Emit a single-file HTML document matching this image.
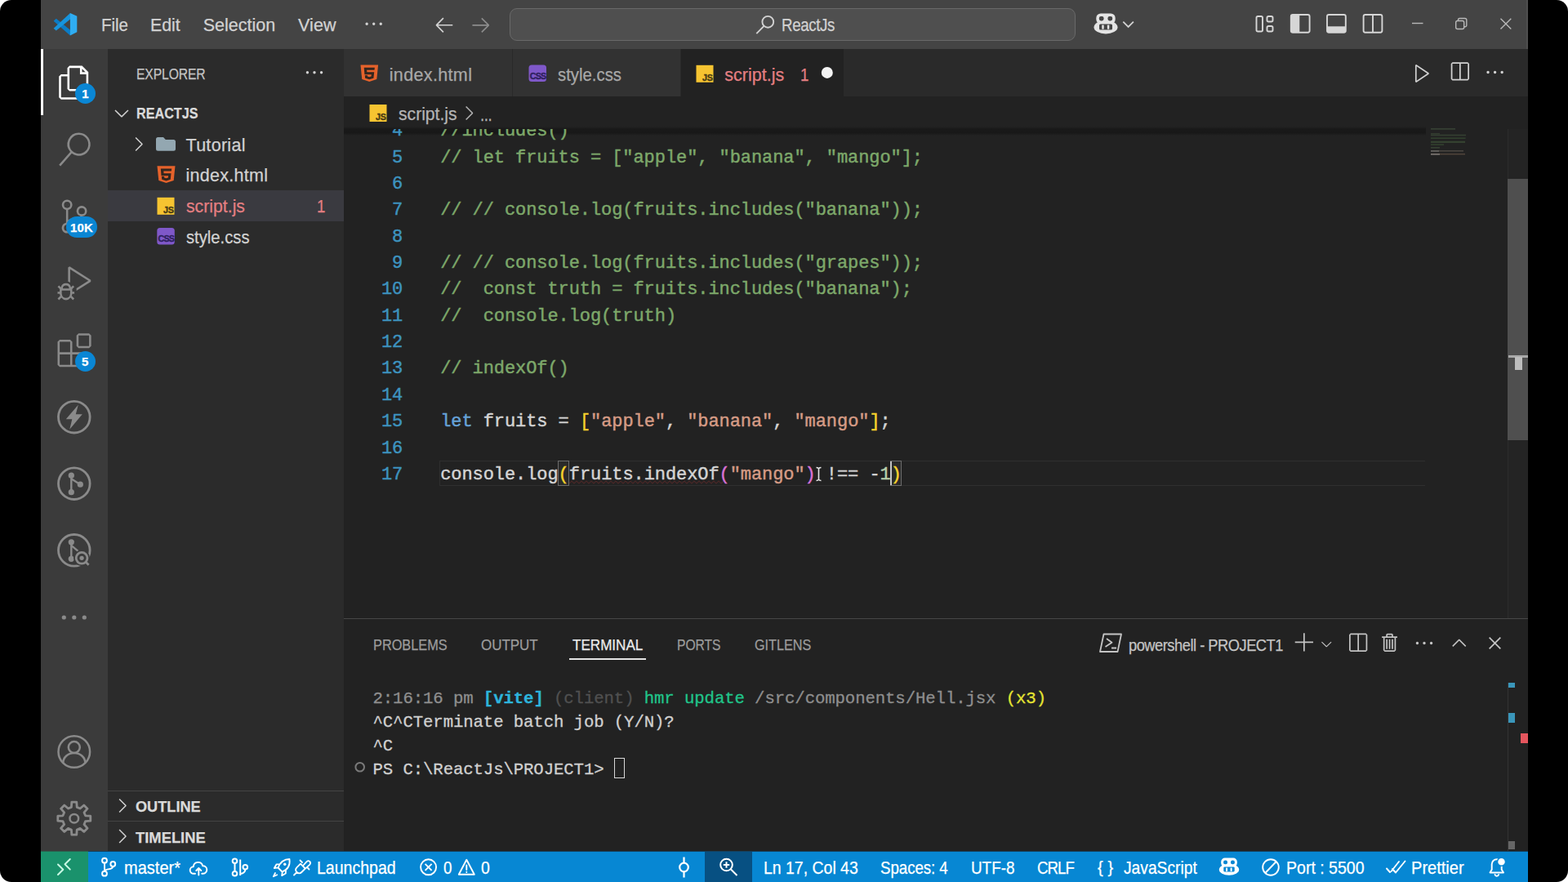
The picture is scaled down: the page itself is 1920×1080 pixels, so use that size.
<!DOCTYPE html>
<html lang="en"><head><meta charset="utf-8"><title>script.js - ReactJs - Visual Studio Code</title>
<style>
html,body{margin:0;padding:0;background:#fff;}
body{width:1920px;height:1080px;overflow:hidden;font-family:"Liberation Sans",sans-serif;}
#frame{position:absolute;left:0;top:0;width:1920px;height:1080px;background:#000;border-radius:14px;overflow:hidden;}
#frame>div{position:absolute;}
#ico{position:absolute;left:0;top:0;}
.t{position:absolute;white-space:pre;transform-origin:0 50%;-webkit-text-stroke:0.25px;}
#code{left:421px;top:158px;width:1325px;height:599px;overflow:hidden;}
#code div{position:absolute;white-space:pre;font-family:"Liberation Mono",monospace;font-size:22px;letter-spacing:-0.074px;height:32px;line-height:32px;color:#d4d4d4;-webkit-text-stroke:0.45px;}
#code .n{left:0;width:72.2px;text-align:right;color:#3d93bf;}
#code .l{left:118.2px;}
.c{color:#7da86a}.k{color:#66a2d8}.s{color:#d59b85}.y{color:#f6d22c}.m{color:#d873d6}.u{color:#b9d0ab}
#term{left:456.5px;top:840.6px;}
#term div{position:absolute;left:0;white-space:pre;font-family:"Liberation Mono",monospace;font-size:20.7px;letter-spacing:-0.11px;height:29px;line-height:29px;color:#d0d0d0;-webkit-text-stroke:0.3px;}
.g1{color:#8e8e8e}.g2{color:#505050}.cy{color:#2db4dc;font-weight:bold}.gr{color:#20c58a}.ye{color:#e4e432}
</style></head><body>
<div id="frame">
<div style="left:50px;top:0px;width:1821px;height:1080px;background:#222222;"></div>
<div style="left:50px;top:0px;width:1821px;height:60px;background:#444444;"></div>
<div style="left:1869px;top:0px;width:2px;height:60px;background:#4e4e4e;"></div>
<div style="left:624px;top:10px;width:693px;height:40px;background:#4f4f4f;border:1px solid #696969;border-radius:9px;box-sizing:border-box;"></div>
<div style="left:50px;top:60px;width:82px;height:982px;background:#3b3b3b;"></div>
<div style="left:50px;top:60px;width:3px;height:81px;background:#ffffff;"></div>
<div style="left:132px;top:60px;width:289px;height:982px;background:#2b2b2b;"></div>
<div style="left:132px;top:233px;width:289px;height:38px;background:#3a3a40;"></div>
<div style="left:132px;top:968px;width:289px;height:1px;background:#444;"></div>
<div style="left:132px;top:1005px;width:289px;height:1px;background:#444;"></div>
<div style="left:421px;top:60px;width:1450px;height:58px;background:#2a2a2a;"></div>
<div style="left:421px;top:60px;width:206px;height:58px;background:#323232;"></div>
<div style="left:628px;top:60px;width:205px;height:58px;background:#323232;"></div>
<div style="left:834px;top:60px;width:199px;height:58px;background:#222222;"></div>
<div style="left:421px;top:155px;width:1325px;height:11px;background:linear-gradient(#222 0%,#191919 28%,#181818 70%,#222 100%);"></div>
<div style="left:538px;top:564px;width:1207px;height:31px;background:transparent;border:1px solid #2f2f2f;border-right:none;box-sizing:border-box;"></div>
<div style="left:683.3px;top:564px;width:13.7px;height:31px;background:#2a2a2a;border:1px solid #6c6c6c;box-sizing:border-box;"></div>
<div style="left:1090px;top:564px;width:13.8px;height:31px;background:#2a2a2a;border:1px solid #6c6c6c;box-sizing:border-box;"></div>
<div style="left:1089.6px;top:565px;width:2.6px;height:29px;background:#c4c4c4;"></div>
<div style="left:1846px;top:158px;width:25px;height:599px;background:#242424;border-left:1.5px solid #2c2c2c;box-sizing:border-box;"></div>
<div style="left:1846px;top:219px;width:25px;height:320px;background:#4f4f4f;"></div>
<div style="left:1847px;top:435px;width:24px;height:3px;background:#a8a8a8;"></div>
<div style="left:1855px;top:437px;width:9px;height:16px;background:#bdbdbd;"></div>
<div style="left:421px;top:757px;width:1450px;height:1px;background:#474747;"></div>
<div style="left:697px;top:806px;width:94px;height:2px;background:#e4e4e4;"></div>
<div style="left:1846px;top:836px;width:1px;height:206px;background:#333;"></div>
<div style="left:1847px;top:836px;width:8px;height:6px;background:#3a96ba;"></div>
<div style="left:1847px;top:873px;width:8px;height:12px;background:#3a96ba;"></div>
<div style="left:1862px;top:898px;width:9px;height:12px;background:#e5565e;"></div>
<div style="left:1847px;top:1030px;width:8px;height:10px;background:#666;"></div>
<div style="left:752px;top:928px;width:13px;height:25px;background:transparent;border:1.5px solid #d8d8d8;box-sizing:border-box;"></div>
<div style="left:50px;top:1042px;width:1821px;height:1px;background:#15415f;"></div>
<div style="left:50px;top:1042px;width:58px;height:1px;background:#2a6350;"></div>
<div style="left:50px;top:1043px;width:1821px;height:37px;background:#0787d3;"></div>
<div style="left:50px;top:1043px;width:58px;height:37px;background:#1a926c;"></div>
<div style="left:863px;top:1043px;width:58px;height:37px;background:#075082;"></div>
<svg id="ico" width="1920" height="1080" viewBox="0 0 1920 1080">
<path transform="translate(70.5 80.6) scale(1.714)" d="M17.5 0h-9L7 1.5V6H2.5L1 7.5v15.07L2.5 24h12.07L16 22.57V18h4.7l1.3-1.43V4.5L17.5 0zm0 2.12l2.38 2.38H17.5V2.12zm-3 20.38h-12v-15H7v9.07L8.5 18h6v4.5zm6-6h-12v-15H16V6h4.5v10.5z" fill="#ffffff" />
<path transform="translate(70.5 162.5) scale(1.714)" d="M15.25 0a8.25 8.25 0 0 0-6.18 13.72L1 22.88l1.12 1 8.05-9.12A8.251 8.251 0 1 0 15.25.01V0zm0 15a6.75 6.75 0 1 1 0-13.5 6.75 6.75 0 0 1 0 13.5z" fill="#8a8a8a" />
<path transform="translate(70.5 244.4) scale(1.714)" d="M21.007 8.222A3.738 3.738 0 0 0 15.045 5.2a3.737 3.737 0 0 0 1.156 6.583 2.988 2.988 0 0 1-2.668 1.67h-2.99a4.456 4.456 0 0 0-2.989 1.165V7.4a3.737 3.737 0 1 0-1.494 0v9.117a3.776 3.776 0 1 0 1.816.099 2.99 2.99 0 0 1 2.668-1.667h2.99a4.484 4.484 0 0 0 4.223-3.039 3.736 3.736 0 0 0 3.25-3.687zM4.565 3.738a2.242 2.242 0 1 1 4.484 0 2.242 2.242 0 0 1-4.484 0zm4.484 16.441a2.242 2.242 0 1 1-4.484 0 2.242 2.242 0 0 1 4.484 0zm8.221-9.715a2.242 2.242 0 1 1 0-4.485 2.242 2.242 0 0 1 0 4.485z" fill="#8a8a8a" />
<path transform="translate(70.5 326.30000000000007) scale(1.714)" d="M10.94 13.5l-1.32 1.32a3.73 3.73 0 0 0-7.24 0L1.06 13.5 0 14.56l1.72 1.72-.22.22V18H0v1.5h1.5v.08c.077.489.214.966.41 1.42L0 22.94 1.06 24l1.65-1.65A4.308 4.308 0 0 0 6 24a4.31 4.31 0 0 0 3.29-1.65L10.94 24 12 22.94 10.09 21c.198-.464.336-.951.41-1.45v-.1H12V18h-1.5v-1.5l-.22-.22L12 14.56l-1.06-1.06zM6 13.5a2.25 2.25 0 0 1 2.25 2.25h-4.5A2.25 2.25 0 0 1 6 13.5zm3 6a3.33 3.33 0 0 1-3 3 3.33 3.33 0 0 1-3-3v-2.25h6v2.25zm14.76-9.9v1.26L13.5 17.37V15.6l8.5-5.37L9 2v9.46a5.07 5.07 0 0 0-1.5-.72V.63L8.64 0l15.12 9.6z" fill="#8a8a8a" />
<path transform="translate(70.5 408.20000000000005) scale(1.714)" d="M13.5 1.5L15 0h7.5L24 1.5V9l-1.5 1.5H15L13.5 9V1.5zm1.5 0V9h7.5V1.5H15zM0 15V6l1.5-1.5H9L10.5 6v7.5H18l1.5 1.5v7.5L18 24H1.5L0 22.5V15zm9-1.5V6H1.5v7.5H9zM9 15H1.5v7.5H9V15zm1.5 7.5H18V15h-7.5v7.5z" fill="#8a8a8a" />
<circle cx="90.8" cy="510.7" r="19.3" fill="none" stroke="#8a8a8a" stroke-width="2.800"/>
<path d="M95.8 495.7L80.8 513.2H88.3L85.3 525.7L100.8 507.2H92.8z" fill="#8a8a8a"/>
<circle cx="90.8" cy="592.2" r="19.3" fill="none" stroke="#8a8a8a" stroke-width="2.800"/>
<g fill="#8a8a8a" stroke="#8a8a8a"><circle cx="87.3" cy="582.2" r="3.6" stroke="none"/><circle cx="87.3" cy="602.7" r="3.6" stroke="none"/><circle cx="98.3" cy="593.2" r="3.6" stroke="none"/><path d="M87.3 582.2V602.7M87.3 586.2L98.3 593.2" fill="none" stroke-width="2.4"/></g>
<circle cx="90.8" cy="673.8" r="19.3" fill="none" stroke="#8a8a8a" stroke-width="2.800"/>
<g fill="#8a8a8a" stroke="#8a8a8a"><circle cx="87.3" cy="663.8" r="3.6" stroke="none"/><circle cx="87.3" cy="684.3" r="3.6" stroke="none"/><path d="M87.3 663.8V684.3M87.3 667.8L96.8 675.8" fill="none" stroke-width="2.4"/></g>
<circle cx="100.1" cy="683.3" r="10" fill="#3b3b3b"/><circle cx="100.1" cy="683.3" r="6.900" fill="none" stroke="#8a8a8a" stroke-width="2.800"/><circle cx="100.1" cy="683.3" r="2.600" fill="#8a8a8a"/><path d="M105.1 688.3l3.500 3.500" stroke="#8a8a8a" stroke-width="2.800"/>
<circle cx="78.3" cy="756" r="2.6" fill="#8a8a8a"/>
<circle cx="90.8" cy="756" r="2.6" fill="#8a8a8a"/>
<circle cx="103.3" cy="756" r="2.6" fill="#8a8a8a"/>
<circle cx="90.8" cy="920.5" r="19.3" fill="none" stroke="#8a8a8a" stroke-width="2.5"/>
<circle cx="90.8" cy="915.0" r="7" fill="none" stroke="#8a8a8a" stroke-width="2.5"/>
<path d="M77.3 934.0a13.5 12 0 0 1 27 0" fill="none" stroke="#8a8a8a" stroke-width="2.5"/>
<path d="M110.8 999.2L110.8 1005.2L104.6 1005.6L103.0 1009.5L107.0 1014.2L102.8 1018.4L98.1 1014.4L94.2 1016.0L93.8 1022.2L87.8 1022.2L87.4 1016.0L83.5 1014.4L78.8 1018.4L74.6 1014.2L78.6 1009.5L77.0 1005.6L70.8 1005.2L70.8 999.2L77.0 998.8L78.6 994.9L74.6 990.2L78.8 986.0L83.5 990.0L87.4 988.4L87.8 982.2L93.8 982.2L94.2 988.4L98.1 990.0L102.8 986.0L107.0 990.2L103.0 994.9L104.6 998.8Z" fill="none" stroke="#8a8a8a" stroke-width="2.800" stroke-linejoin="round"/>
<circle cx="90.8" cy="1002.2" r="5.3" fill="none" stroke="#8a8a8a" stroke-width="2.5"/>
<path d="M65.600 25.800l3.200-3 17.200 14v6.700z" fill="#0b7cc6"/><path d="M65.600 34.800l3.200 2.600 17.200-14v-7.500z" fill="#1794dc"/><path d="M85.900 15.900l8.400 3.900v19.500l-8.400 4.200z" fill="#2fadf2"/>
<path transform="translate(444.0 15.600000000000001) scale(1.7125)" d="M4 8a1 1 0 1 1-2 0 1 1 0 0 1 2 0zm5 0a1 1 0 1 1-2 0 1 1 0 0 1 2 0zm5 0a1 1 0 1 1-2 0 1 1 0 0 1 2 0z" fill="#d2d2d2" />
<path transform="translate(530.3 16.3) scale(1.7125)" d="M7 3.093l-5 5V8.8l5 5 .707-.707-4.146-4.147H14v-1H3.56L7.708 3.8 7 3.093z" fill="#d2d2d2" />
<path transform="translate(575.0 16.3) scale(1.7125)" d="M9 13.887l5-5V8.18l-5-5-.707.707 4.146 4.147H2v1h10.44L8.292 13.18l.707.707z" fill="#8c8c8c" />
<g fill="none" stroke="#d2d2d2" stroke-width="1.900"><circle cx="940.300" cy="26.800" r="6.900"/><path d="M935.500 31.800l-9.200 9.300"/></g>
<path transform="translate(371.3 75.0) scale(1.7125)" d="M4 8a1 1 0 1 1-2 0 1 1 0 0 1 2 0zm5 0a1 1 0 1 1-2 0 1 1 0 0 1 2 0zm5 0a1 1 0 1 1-2 0 1 1 0 0 1 2 0z" fill="#d2d2d2" />
<path transform="translate(135.3 124.60000000000001) scale(1.7125)" d="M7.976 10.072l4.357-4.357.62.618L8.284 11h-.618L3 6.333l.619-.618 4.357 4.357z" fill="#d2d2d2" />
<path transform="translate(155.8 162.8) scale(1.7125)" d="M10.072 8.024L5.715 3.667l.618-.62L11 7.716v.618L6.333 13l-.618-.619 4.357-4.357z" fill="#d2d2d2" />
<path transform="translate(135.8 972.8) scale(1.7125)" d="M10.072 8.024L5.715 3.667l.618-.62L11 7.716v.618L6.333 13l-.618-.619 4.357-4.357z" fill="#d2d2d2" />
<path transform="translate(135.8 1010.3) scale(1.7125)" d="M10.072 8.024L5.715 3.667l.618-.62L11 7.716v.618L6.333 13l-.618-.619 4.357-4.357z" fill="#d2d2d2" />
<path transform="translate(560.3 124.8) scale(1.7125)" d="M10.072 8.024L5.715 3.667l.618-.62L11 7.716v.618L6.333 13l-.618-.619 4.357-4.357z" fill="#b4b4b4" />
<path transform="translate(1727.8 75.6) scale(1.7125)" d="M3.78 2L3 2.41v12l.78.42 9-6V8l-9-6zM4 13.48V3.35l7.6 5.07L4 13.48z" fill="#d2d2d2" />
<path transform="translate(1773.3 74.6) scale(1.7125)" d="M14 1H3L2 2v11l1 1h11l1-1V2l-1-1zM8 13H3V2h5v11zm6 0H9V2h5v11z" fill="#d2d2d2" />
<path transform="translate(1816.8999999999999 74.8) scale(1.7125)" d="M4 8a1 1 0 1 1-2 0 1 1 0 0 1 2 0zm5 0a1 1 0 1 1-2 0 1 1 0 0 1 2 0zm5 0a1 1 0 1 1-2 0 1 1 0 0 1 2 0z" fill="#d2d2d2" />
<path transform="translate(1584.0 773.5999999999999) scale(1.7125)" d="M14 7v1H8v6H7V8H1V7h6V1h1v6h6z" fill="#c4c4c4" />
<path transform="translate(1614.3 778.5) scale(1.25)" d="M7.976 10.072l4.357-4.357.62.618L8.284 11h-.618L3 6.333l.619-.618 4.357 4.357z" fill="#c4c4c4" />
<path transform="translate(1648.6 773.9) scale(1.7125)" d="M14 1H3L2 2v11l1 1h11l1-1V2l-1-1zM8 13H3V2h5v11zm6 0H9V2h5v11z" fill="#c4c4c4" />
<path transform="translate(1688.7 774.0999999999999) scale(1.7125)" d="M10 3h3v1h-1v9l-1 1H4l-1-1V4H2V3h3V2a1 1 0 0 1 1-1h3a1 1 0 0 1 1 1v1zM9 2H6v1h3V2zM4 13h7V4H4v9zm2-8H5v7h1V5zm1 0h1v7H7V5zm2 0h1v7H9V5z" fill="#c4c4c4" />
<path transform="translate(1730.3 773.8) scale(1.7125)" d="M4 8a1 1 0 1 1-2 0 1 1 0 0 1 2 0zm5 0a1 1 0 1 1-2 0 1 1 0 0 1 2 0zm5 0a1 1 0 1 1-2 0 1 1 0 0 1 2 0z" fill="#c4c4c4" />
<path transform="translate(1773.0 774.3) scale(1.7125)" d="M8.024 5.928l-4.357 4.357-.62-.618L7.716 5h.618L13 9.667l-.619.618-4.357-4.357z" fill="#c4c4c4" />
<path transform="translate(1816.8 773.8) scale(1.7125)" d="M8 8.707l3.646 3.647.708-.707L8.707 8l3.647-3.646-.707-.708L8 7.293 4.354 3.646l-.707.708L7.293 8l-3.646 3.646.707.708L8 8.707z" fill="#c4c4c4" />
<g fill="none" stroke="#c4c4c4" stroke-width="1.8" stroke-linejoin="round"><path d="M1351.5 776.5h21.5l-4.5 21.5h-21.5z"/><path d="M1355 782l6.5 4.8-8 5.2M1361 793.5h6"/></g>
<g fill="none" stroke="#b8b8b8" stroke-width="1.4"><path d="M1729 28.5h13.5"/><rect x="1782.7" y="25.5" width="10" height="10" rx="2"/><path d="M1785.5 25.5v-1.2a1.8 1.8 0 0 1 1.8-1.8h6.5a2 2 0 0 1 2 2v6.5a1.8 1.8 0 0 1-1.8 1.8h-1.2"/><path d="M1837.5 22.8l12.8 12.8M1850.3 22.8l-12.8 12.8"/></g>
<g fill="none" stroke="#d6d6d6" stroke-width="1.9"><rect x="1538.5" y="20" width="7.5" height="18.5" rx="1.8"/><rect x="1551.5" y="20" width="7" height="6.5" rx="1.8"/><rect x="1551.5" y="32" width="7" height="6.5" rx="1.8"/><rect x="1580.8" y="18" width="22.8" height="21.8" rx="2.2"/><rect x="1625" y="18" width="22.8" height="21.8" rx="2.2"/><rect x="1669.6" y="18" width="22.8" height="21.8" rx="2.2"/><path d="M1681 18v21.8"/></g>
<path d="M1580.8 18h10.5v21.8h-10.5z" fill="#d6d6d6"/><path d="M1625 32.3h22.8v7.5h-22.8z" fill="#d6d6d6"/>
<g transform="translate(1354 28.8) scale(1)"><rect x="-11.700" y="-12.400" width="23.400" height="13" rx="5.600" fill="#e4e4e4"/><ellipse cx="0" cy="4.500" rx="14.500" ry="8.200" fill="#e4e4e4"/><rect x="-8.200" y="-8.800" width="5.800" height="5.400" rx="2.300" fill="#444444"/><rect x="2.400" y="-8.800" width="5.800" height="5.400" rx="2.300" fill="#444444"/><rect x="-8" y="0.700" width="16" height="6.900" rx="1.500" fill="#444444"/><rect x="-4.700" y="1.700" width="2.400" height="5.300" rx="0.800" fill="#e4e4e4"/><rect x="1.900" y="1.700" width="2.400" height="5.300" rx="0.800" fill="#e4e4e4"/></g>
<path d="M1375.300 26.600l6.300 6.300 6.300-6.300" fill="none" stroke="#d2d2d2" stroke-width="1.800"/>
<path d="M191 170.500a2.500 2.500 0 0 1 2.500-2.500h6.500l2.800 3h9.700a2.500 2.500 0 0 1 2.500 2.500v8.700a2.500 2.500 0 0 1-2.500 2.500h-19a2.500 2.500 0 0 1-2.500-2.500z" fill="#93a7b1"/>
<g transform="translate(192.5 203.2) scale(1.0)"><path d="M0 0h22l-1.800 17.800L11 20.800 1.800 17.800z" fill="#e5622b"/><path d="M4.300 3.300h13.400l-.35 3.100H7.800l.25 2.600h9l-.8 7.600L11 18.200l-5.250-1.600-.35-3.700h3.100l.15 1.500 2.350.7 2.350-.7.25-2.400H5z" fill="#33261f"/></g>
<rect x="192.5" y="241.8" width="21" height="21" fill="#f6c431"/>
<text x="212.7" y="260.5" font-family="Liberation Sans, sans-serif" font-weight="700" font-size="10.800" text-anchor="end" fill="#4a3d14" stroke="#4a3d14" stroke-width="0.400" letter-spacing="-0.200">JS</text>
<rect x="192.3" y="279" width="21.5" height="20.5" rx="3.500" fill="#7f58c9"/>
<text x="203.35000000000002" y="296.3" font-family="Liberation Sans, sans-serif" font-weight="700" font-size="10.800" text-anchor="middle" fill="#2f2160" stroke="#2f2160" stroke-width="0.400" letter-spacing="-0.900">CSS</text>
<g transform="translate(441.5 79.5) scale(0.98)"><path d="M0 0h22l-1.800 17.800L11 20.800 1.800 17.800z" fill="#e5622b"/><path d="M4.300 3.300h13.400l-.35 3.100H7.800l.25 2.600h9l-.8 7.600L11 18.200l-5.250-1.600-.35-3.700h3.100l.15 1.500 2.350.7 2.350-.7.25-2.400H5z" fill="#33261f"/></g>
<rect x="647.5" y="79.5" width="21.5" height="20.5" rx="3.500" fill="#7f58c9"/>
<text x="658.55" y="96.8" font-family="Liberation Sans, sans-serif" font-weight="700" font-size="10.800" text-anchor="middle" fill="#2f2160" stroke="#2f2160" stroke-width="0.400" letter-spacing="-0.900">CSS</text>
<rect x="852.5" y="79.8" width="21" height="21" fill="#f6c431"/>
<text x="872.7" y="98.5" font-family="Liberation Sans, sans-serif" font-weight="700" font-size="10.800" text-anchor="end" fill="#4a3d14" stroke="#4a3d14" stroke-width="0.400" letter-spacing="-0.200">JS</text>
<rect x="452.5" y="128" width="21" height="21" fill="#f6c431"/>
<text x="472.7" y="146.7" font-family="Liberation Sans, sans-serif" font-weight="700" font-size="10.800" text-anchor="end" fill="#4a3d14" stroke="#4a3d14" stroke-width="0.400" letter-spacing="-0.200">JS</text>
<circle cx="1012.800" cy="88.900" r="7" fill="#f4f4f4"/>
<circle cx="440.700" cy="939.300" r="5.300" fill="none" stroke="#7a7a7a" stroke-width="2"/>
<rect x="1752" y="157.1" width="30" height="1.6" fill="#4a5d45" opacity="0.550"/>
<rect x="1752" y="163.1" width="11" height="1.3" fill="#46593f" opacity="0.550"/>
<rect x="1752" y="164.7" width="43" height="1.6" fill="#465a40" opacity="0.550"/>
<rect x="1752" y="168.4" width="42.6" height="1.6" fill="#3e5a38" opacity="0.550"/>
<rect x="1752" y="172.8" width="42" height="2.1" fill="#45603e" opacity="0.550"/>
<rect x="1752" y="176.3" width="16" height="1.6" fill="#3f5a39" opacity="0.550"/>
<rect x="1752" y="180.0" width="11" height="1.6" fill="#46593f" opacity="0.550"/>
<rect x="1752" y="184.0" width="40" height="1.6" fill="#6a6258" opacity="0.550"/>
<rect x="1752" y="187.9" width="42" height="1.6" fill="#77614f" opacity="0.550"/>
<rect x="1752" y="184" width="10" height="2" fill="#8a8a8a" opacity="0.400"/><rect x="1752" y="187.900" width="11" height="2" fill="#9a9a9a" opacity="0.500"/>
<path d="M697 592l3 -3l3 3l3 -3l3 3l3 -3l3 3l3 -3l3 3l3 -3l3 3l3 -3l3 3l3 -3l3 3l3 -3l3 3l3 -3l3 3l3 -3l3 3l3 -3l3 3l3 -3l3 3l3 -3l3 3l3 -3l3 3l3 -3l3 3l3 -3l3 3l3 -3l3 3l3 -3l3 3l3 -3l3 3l3 -3l3 3l3 -3l3 3l3 -3l3 3l3 -3l3 3l3 -3l3 3l3 -3l3 3l3 -3l3 3l3 -3l3 3l3 -3l3 3l3 -3l3 3l3 -3l3 3l3 -3l3 3l3 -3" fill="none" stroke="#7a2f2f" stroke-width="1.2" opacity="0.450"/>
<g stroke="#e6e6e6" stroke-width="1.600" fill="none"><path d="M1002.500 573v15M999.500 572.500q2 0 3 1.200q1-1.200 3-1.200M999.500 588.500q2 0 3-1.200q1 1.200 3 1.200"/></g>
<path d="M71 1058.500l6.300 6.200-6.300 6.300M85.800 1052l-6.300 6.300 6.300 6.300" fill="none" stroke="#c8f8e4" stroke-width="2" stroke-linecap="round" stroke-linejoin="round" />
<g fill="none" stroke="#ffffff" stroke-width="2"><circle cx="128" cy="1053.700" r="2.900"/><circle cx="128" cy="1069.700" r="2.900"/><circle cx="138.300" cy="1058" r="2.900"/><path d="M128 1056.600v10.200M138.300 1060.900c0 4.500-10.300 2.500-10.300 6"/></g>
<path d="M239 1069.800h-1.800a4.300 4.300 0 0 1-.4-8.600 5.800 5.800 0 0 1 11.400-1 4.800 4.800 0 0 1 .6 9.600h-1.600M243.300 1071.500v-8M240.300 1066l3-3 3 3" fill="none" stroke="#ffffff" stroke-width="1.9" stroke-linecap="round" stroke-linejoin="round" />
<g fill="none" stroke="#ffffff" stroke-width="2"><circle cx="287.500" cy="1054.300" r="2.800"/><circle cx="287.500" cy="1069.800" r="2.800"/><circle cx="300.300" cy="1061.700" r="2.800"/><path d="M287.500 1057.100v9.900M294.200 1052.500v19.500M300.300 1064.500c0 4-3 5-6 5.500"/></g>
<path d="M354.500 1052c-6.500 0-11.500 4-14 10.500l5 5c6.500-2.500 10-7.500 9-15.500zM340.500 1062.300l-4.700.700 2.800-4.700 3.700-.2M345.800 1067.500l-.7 4.700 4.700-2.800.2-3.700M337 1069l-2.200 4.300 4.400-2" fill="none" stroke="#ffffff" stroke-width="1.8" stroke-linecap="round" stroke-linejoin="round" />
<circle cx="348.700" cy="1058.300" r="1.700" fill="#ffffff"/>
<path d="M360 1071.500l3.500-3.500M363.500 1068c-1.800-1.800-1.800-4 0-5.800l4.500-4.500 5.800 5.800-4.500 4.500c-1.800 1.800-4 1.800-5.800 0zM370 1056l-2.500-2.500M376 1062l2.500 2.500M371.500 1059.500l4-4.300c1.200-1.200 2.800-1.200 3.800-.2s1 2.600-.2 3.800l-4.300 4" fill="none" stroke="#ffffff" stroke-width="1.8" stroke-linecap="round" stroke-linejoin="round" />
<g fill="none" stroke="#ffffff" stroke-width="1.900"><circle cx="524.600" cy="1061.800" r="9.500"/><path d="M520.600 1057.800l8 8M528.600 1057.800l-8 8"/></g>
<path d="M571.300 1052.800l9.500 18h-19zM571.300 1059.500v5.500M571.300 1067.600v.4" fill="none" stroke="#ffffff" stroke-width="1.9" stroke-linecap="round" stroke-linejoin="round" />
<g fill="none" stroke="#ffffff" stroke-width="2.200"><circle cx="837.500" cy="1062" r="5.300"/><path d="M837.500 1049.500v7M837.500 1067.500v7"/></g>
<g fill="none" stroke="#ffffff" stroke-width="2"><circle cx="889.500" cy="1059" r="7.300"/><path d="M895 1064.500l7.500 7.500M885.800 1059h7.400M889.500 1055.300v7.400"/></g>
<g transform="translate(1505 1061) scale(0.84)"><rect x="-11.700" y="-12.400" width="23.400" height="13" rx="5.600" fill="#ffffff"/><ellipse cx="0" cy="4.500" rx="14.500" ry="8.200" fill="#ffffff"/><rect x="-8.200" y="-8.800" width="5.800" height="5.400" rx="2.300" fill="#0787d3"/><rect x="2.400" y="-8.800" width="5.800" height="5.400" rx="2.300" fill="#0787d3"/><rect x="-8" y="0.700" width="16" height="6.900" rx="1.500" fill="#0787d3"/><rect x="-4.700" y="1.700" width="2.400" height="5.300" rx="0.800" fill="#ffffff"/><rect x="1.900" y="1.700" width="2.400" height="5.300" rx="0.800" fill="#ffffff"/></g>
<g fill="none" stroke="#ffffff" stroke-width="1.900"><circle cx="1556" cy="1062" r="9.800"/><path d="M1549.300 1069l13.400-14"/></g>
<path d="M1698 1063.500l4 4.500M1705 1064l4 4.500 11.500-14M1703.500 1067l9.500-12" fill="none" stroke="#ffffff" stroke-width="1.9" stroke-linecap="round" stroke-linejoin="round" />
<path d="M1824.500 1068.500h16.500l-2.300-3.800v-6.500a6 6 0 0 0-12 0v6.500zM1830.500 1071a2.400 2.400 0 0 0 4.600 0" fill="none" stroke="#ffffff" stroke-width="1.9" stroke-linecap="round" stroke-linejoin="round" />
<circle cx="1838.500" cy="1055.200" r="5" fill="#ffffff" stroke="#0787d3" stroke-width="1.500"/>
</svg>
<div style="left:92px;top:102px;width:25px;height:25px;background:#0a86d4;border-radius:13px;"></div>
<div style="left:81px;top:265px;width:38px;height:26px;background:#0a86d4;border-radius:13px;"></div>
<div style="left:91.5px;top:429.5px;width:25px;height:25px;background:#0a86d4;border-radius:13px;"></div>
<div id="code"><div class="n" style="top:-12.8px">4</div><div class="l" style="top:-12.8px"><span class="c">//includes()</span></div><div class="n" style="top:19.6px">5</div><div class="l" style="top:19.6px"><span class="c">// let fruits = [&quot;apple&quot;, &quot;banana&quot;, &quot;mango&quot;];</span></div><div class="n" style="top:51.9px">6</div><div class="l" style="top:51.9px"></div><div class="n" style="top:84.3px">7</div><div class="l" style="top:84.3px"><span class="c">// // console.log(fruits.includes(&quot;banana&quot;));</span></div><div class="n" style="top:116.6px">8</div><div class="l" style="top:116.6px"></div><div class="n" style="top:149.0px">9</div><div class="l" style="top:149.0px"><span class="c">// // console.log(fruits.includes(&quot;grapes&quot;));</span></div><div class="n" style="top:181.4px">10</div><div class="l" style="top:181.4px"><span class="c">//  const truth = fruits.includes(&quot;banana&quot;);</span></div><div class="n" style="top:213.7px">11</div><div class="l" style="top:213.7px"><span class="c">//  console.log(truth)</span></div><div class="n" style="top:246.1px">12</div><div class="l" style="top:246.1px"></div><div class="n" style="top:278.4px">13</div><div class="l" style="top:278.4px"><span class="c">// indexOf()</span></div><div class="n" style="top:310.8px">14</div><div class="l" style="top:310.8px"></div><div class="n" style="top:343.1px">15</div><div class="l" style="top:343.1px"><span class="k">let</span> fruits = <span class="y">[</span><span class="s">&quot;apple&quot;</span>, <span class="s">&quot;banana&quot;</span>, <span class="s">&quot;mango&quot;</span><span class="y">]</span>;</div><div class="n" style="top:375.5px">16</div><div class="l" style="top:375.5px"></div><div class="n" style="top:407.8px">17</div><div class="l" style="top:407.8px">console.log<span class="y">(</span>fruits.indexOf<span class="m">(</span><span class="s">&quot;mango&quot;</span><span class="m">)</span> !== -<span class="u">1</span><span class="y">)</span></div></div>
<div id="term"><div style="top:0.0px"><span class="g1">2:16:16 pm</span> <span class="cy">[vite]</span> <span class="g2">(client)</span> <span class="gr">hmr update</span> <span class="g1">/src/components/Hell.jsx</span> <span class="ye">(x3)</span></div><div style="top:29.2px">^C^CTerminate batch job (Y/N)?</div><div style="top:58.4px">^C</div><div style="top:87.6px">PS C:\ReactJs\PROJECT1&gt; </div></div>
<span class="t" style="left:124px;top:17.2px;height:28px;line-height:28px;font-size:21.5px;color:#d2d2d2;transform:scaleX(0.952);">File</span>
<span class="t" style="left:184.3px;top:17.2px;height:28px;line-height:28px;font-size:21.5px;color:#d2d2d2;transform:scaleX(0.990);">Edit</span>
<span class="t" style="left:248.7px;top:17.2px;height:28px;line-height:28px;font-size:21.5px;color:#d2d2d2;">Selection</span>
<span class="t" style="left:365px;top:17.2px;height:28px;line-height:28px;font-size:21.5px;color:#d2d2d2;letter-spacing:0.12px;">View</span>
<span class="t" style="left:957.3px;top:17.2px;height:28px;line-height:28px;font-size:21.5px;color:#d2d2d2;letter-spacing:-0.42px;transform:scaleX(0.870);">ReactJs</span>
<span class="t" style="left:166.5px;top:79.7px;height:23px;line-height:23px;font-size:18px;color:#c4c4c4;letter-spacing:-0.12px;transform:scaleX(0.870);">EXPLORER</span>
<span class="t" style="left:166.5px;top:127.2px;height:24px;line-height:24px;font-size:18.5px;color:#dadada;font-weight:700;transform:scaleX(0.874);">REACTJS</span>
<span class="t" style="left:227.5px;top:163.7px;height:28px;line-height:28px;font-size:21.5px;color:#d2d2d2;letter-spacing:0.29px;">Tutorial</span>
<span class="t" style="left:227.5px;top:201.3px;height:28px;line-height:28px;font-size:21.5px;color:#d2d2d2;letter-spacing:0.27px;">index.html</span>
<span class="t" style="left:227.5px;top:239.0px;height:28px;line-height:28px;font-size:21.5px;color:#e47f82;transform:scaleX(0.988);">script.js</span>
<span class="t" style="left:387.5px;top:239.0px;height:28px;line-height:28px;font-size:21.5px;color:#e47f82;letter-spacing:-3.92px;transform:scaleX(0.870);">1</span>
<span class="t" style="left:227.5px;top:276.7px;height:28px;line-height:28px;font-size:21.5px;color:#d2d2d2;transform:scaleX(0.940);">style.css</span>
<span class="t" style="left:166px;top:976.0px;height:24px;line-height:24px;font-size:18.5px;color:#dadada;font-weight:700;transform:scaleX(0.981);">OUTLINE</span>
<span class="t" style="left:166px;top:1013.7px;height:24px;line-height:24px;font-size:18.5px;color:#dadada;font-weight:700;transform:scaleX(0.993);">TIMELINE</span>
<span class="t" style="left:476.7px;top:77.5px;height:28px;line-height:28px;font-size:21.5px;color:#a8a8a8;letter-spacing:0.36px;">index.html</span>
<span class="t" style="left:682.7px;top:77.5px;height:28px;line-height:28px;font-size:21.5px;color:#a8a8a8;transform:scaleX(0.946);">style.css</span>
<span class="t" style="left:887.3px;top:77.5px;height:28px;line-height:28px;font-size:21.5px;color:#e47f82;">script.js</span>
<span class="t" style="left:980px;top:77.5px;height:28px;line-height:28px;font-size:21.5px;color:#e47f82;letter-spacing:-2.43px;transform:scaleX(0.870);">1</span>
<span class="t" style="left:487.7px;top:126.0px;height:28px;line-height:28px;font-size:21.5px;color:#b4b4b4;transform:scaleX(0.983);">script.js</span>
<span class="t" style="left:588.3px;top:126.5px;height:28px;line-height:28px;font-size:21.5px;color:#b4b4b4;letter-spacing:-0.46px;transform:scaleX(0.870);">...</span>
<span class="t" style="left:456.7px;top:778.8px;height:23px;line-height:23px;font-size:18px;color:#9c9c9c;transform:scaleX(0.906);">PROBLEMS</span>
<span class="t" style="left:589px;top:778.8px;height:23px;line-height:23px;font-size:18px;color:#9c9c9c;transform:scaleX(0.942);">OUTPUT</span>
<span class="t" style="left:701px;top:778.8px;height:23px;line-height:23px;font-size:18px;color:#ececec;transform:scaleX(0.948);">TERMINAL</span>
<span class="t" style="left:829px;top:778.8px;height:23px;line-height:23px;font-size:18px;color:#9c9c9c;letter-spacing:-0.08px;transform:scaleX(0.870);">PORTS</span>
<span class="t" style="left:924px;top:778.8px;height:23px;line-height:23px;font-size:18px;color:#9c9c9c;transform:scaleX(0.900);">GITLENS</span>
<span class="t" style="left:1381.5px;top:775.8px;height:27px;line-height:27px;font-size:21px;color:#c4c4c4;letter-spacing:-0.55px;transform:scaleX(0.870);">powershell - PROJECT1</span>
<span class="t" style="left:151.7px;top:1048.9px;height:28px;line-height:28px;font-size:21.5px;color:#ffffff;transform:scaleX(0.931);">master*</span>
<span class="t" style="left:388.3px;top:1048.9px;height:28px;line-height:28px;font-size:21.5px;color:#ffffff;transform:scaleX(0.909);">Launchpad</span>
<span class="t" style="left:543.3px;top:1048.9px;height:28px;line-height:28px;font-size:21.5px;color:#ffffff;letter-spacing:-0.47px;transform:scaleX(0.870);">0</span>
<span class="t" style="left:589.2px;top:1048.9px;height:28px;line-height:28px;font-size:21.5px;color:#ffffff;transform:scaleX(0.902);">0</span>
<span class="t" style="left:935px;top:1048.9px;height:28px;line-height:28px;font-size:21.5px;color:#ffffff;transform:scaleX(0.905);">Ln 17, Col 43</span>
<span class="t" style="left:1078.3px;top:1048.9px;height:28px;line-height:28px;font-size:21.5px;color:#ffffff;letter-spacing:-0.06px;transform:scaleX(0.870);">Spaces: 4</span>
<span class="t" style="left:1189.3px;top:1048.9px;height:28px;line-height:28px;font-size:21.5px;color:#ffffff;transform:scaleX(0.877);">UTF-8</span>
<span class="t" style="left:1270px;top:1048.9px;height:28px;line-height:28px;font-size:21.5px;color:#ffffff;letter-spacing:-1.11px;transform:scaleX(0.870);">CRLF</span>
<span class="t" style="left:1344px;top:1048.9px;height:26px;line-height:26px;font-size:20px;color:#ffffff;letter-spacing:0.19px;">{ }</span>
<span class="t" style="left:1376px;top:1048.9px;height:28px;line-height:28px;font-size:21.5px;color:#ffffff;transform:scaleX(0.894);">JavaScript</span>
<span class="t" style="left:1574.5px;top:1048.9px;height:28px;line-height:28px;font-size:21.5px;color:#ffffff;transform:scaleX(0.908);">Port : 5500</span>
<span class="t" style="left:1728px;top:1048.9px;height:28px;line-height:28px;font-size:21.5px;color:#ffffff;transform:scaleX(0.933);">Prettier</span>
<span class="t" style="left:100.3px;top:104.8px;height:20px;line-height:20px;font-size:15px;color:#ffffff;font-weight:700;letter-spacing:0.06px;z-index:3;">1</span>
<span class="t" style="left:86px;top:268.6px;height:20px;line-height:20px;font-size:15px;color:#ffffff;font-weight:700;letter-spacing:0.16px;z-index:3;">10K</span>
<span class="t" style="left:100px;top:432.6px;height:20px;line-height:20px;font-size:15px;color:#ffffff;font-weight:700;letter-spacing:0.06px;z-index:3;">5</span>
</div>
</body></html>
